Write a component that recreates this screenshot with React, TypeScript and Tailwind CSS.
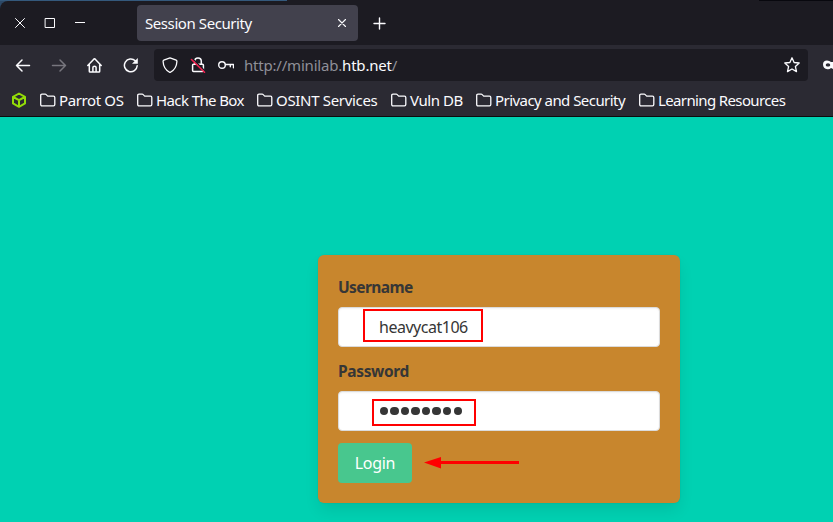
import React from "react";

const bookmarks = [
  { name: "Parrot OS", item: "w-[97px]", text: "tracking-[-0.38px]" },
  { name: "Hack The Box", item: "w-[120px]", text: "tracking-[-0.6px]" },
  { name: "OSINT Services", item: "w-[134px]", text: "tracking-[-0.32px]" },
  { name: "Vuln DB", item: "w-[85px]", text: "tracking-[-0.42px]" },
  { name: "Privacy and Security", item: "w-[163px]", text: "tracking-[-0.55px]" },
  { name: "Learning Resources", item: "w-[150px]", text: "tracking-[-0.63px]" },
];

type IconProps = { className?: string; children: React.ReactNode; size?: number; stroke?: number };

function Icon({ className = "", children, size = 16, stroke = 1.3 }: IconProps) {
  return (
    <svg
      width={size}
      height={size}
      viewBox={`0 0 ${size} ${size}`}
      fill="none"
      stroke="currentColor"
      strokeWidth={stroke}
      strokeLinecap="round"
      strokeLinejoin="round"
      className={`shrink-0 ${className}`}
    >
      {children}
    </svg>
  );
}

function TitleBar() {
  return (
    <div className="flex h-11 rounded-tl-lg bg-[#1c1b22] pl-3">
      <div className="flex h-11 w-[125px] items-center gap-[14px] text-[#fbfbfe]">
        <Icon stroke={1}><path d="M3.500 3.500l9 9M12.500 3.500l-9 9" /></Icon>
        <Icon stroke={1}><path strokeLinejoin="miter" d="M3.500 3.500h9v9h-9z" /></Icon>
        <Icon stroke={1}><path strokeLinecap="butt" d="M3 7.500h10" /></Icon>
      </div>
      <div className="mt-1 flex h-9 w-[221px] items-center justify-between rounded bg-[#42414d] pr-2 pl-2 text-[#fbfbfe]">
        <span className="text-[15px] tracking-[-0.42px]">Session Security</span>
        <Icon stroke={1.1}><path d="M4.500 4.500l7 7M11.500 4.500l-7 7" /></Icon>
      </div>
      <Icon className="mt-[14px] ml-[13px] text-[#fbfbfe]" stroke={1.4}><path d="M8.500 3v11M3 8.500h11" /></Icon>
    </div>
  );
}

function Toolbar() {
  return (
    <div className="flex h-10 items-center overflow-hidden pl-[15px] text-[#fbfbfe]">
      <Icon stroke={1.5}><path d="M14.500 8.500H1.500M7 3L1.500 8.500 7 14" /></Icon>
      <Icon stroke={1.5} className="ml-5 text-[#77767e]"><path d="M1.500 8.500h13M9 3l5.500 5.500L9 14" /></Icon>
      <Icon className="ml-5" stroke={1.5}>
        <path d="M.8 8.500L7 1.900q.5-.4 1 0l6.200 6.600M2.300 7.500v6.700q0 .8.8.8h8.800q.8 0 .8-.8V7.500M5.900 14.500V10.600q0-1.300 1.600-1.300t1.600 1.300V14.500" />
      </Icon>
      <Icon className="ml-5" stroke={1.5}>
        <path d="M14.200 8.800A6.400 6.400 0 1 1 12.300 3.800" />
        <path fill="currentColor" stroke="none" d="M14.800 1v5.800H9z" />
      </Icon>
      <div className="ml-[15px] flex h-8 w-[654px] items-center rounded bg-[#1c1b22] pr-2 pl-2">
        <Icon><path d="M8 .9L14.200 3.200Q15 3.500 14.900 4.500C14.700 9.500 12.500 13.200 8 15.500 3.500 13.200 1.300 9.500 1.100 4.500Q1 3.500 1.800 3.200z" /></Icon>
        <Icon className="ml-3" stroke={1.5}>
          <path d="M4.700 7V4.200a3.300 3.300 0 0 1 6.600 0V7M3.500 7.200h9q.9 0 .9.900v5.500q0 .9-.9.900h-9q-.9 0-.9-.9V8.100q0-.9.900-.9z" />
          <path stroke="#1c1b22" strokeWidth="1.500" d="M2.500 1.700l13 12.800" />
          <path stroke="#f0204f" strokeWidth="1.600" d="M1.500 2.500l13 12.800" />
        </Icon>
        <Icon className="ml-3" stroke={1.4}>
          <circle cx="4" cy="8" r="3.300" />
          <path d="M7.500 7.500H15.500V10.800M12.300 7.500V9.800" />
        </Icon>
        <div className="ml-[10px] flex-1 text-[15px] tracking-[-0.2px] text-[#8f8f98]">
          http://minilab.<span className="text-[#fbfbfe]">htb.net</span>/
        </div>
        <Icon stroke={1.3}><path d="M8 .8l2.100 4.700 5.100.5-3.800 3.500 1.100 5.100L8 12l-4.500 2.600 1.100-5.100L.8 6l5.100-.5z" /></Icon>
      </div>
      <svg width="10" height="16" viewBox="0 0 10 16" className="ml-[15px] shrink-0">
        <path fillRule="evenodd" fill="#fbfbfe" d="M4 3.500q2.500 0 4 1.500H10v7q-.8-.5-2-1-1.500 1.500-3.500 1.200C1.500 11.900 0 10.300 0 7.500 0 5 1.500 3.500 4 3.500zM5 6.200C3.700 6.200 2.800 7 2.800 8S3.700 9.600 5 9.600 7.200 9 7.200 8 6.300 6.200 5 6.200z" />
      </svg>
    </div>
  );
}

function BookmarksBar() {
  return (
    <div className="flex h-8 items-center overflow-hidden border-b border-[#0c0c0d] pb-px pl-[11px] text-[#fbfbfe]">
      <Icon className="mr-[13px] text-[#93dc08]" stroke={2}>
        <path d="M8 1.500l6 3.400v6.500L8 14.800l-6-3.400V4.900zM2.200 5L8 8.200 13.800 5M8 8.200v6.400" />
      </Icon>
      {bookmarks.map((b) => (
        <div key={b.name} className={`flex shrink-0 items-center gap-[3px] ${b.item}`}>
          <Icon><path d="M.7 12.500v-9q0-1.300 1.300-1.300h3.200q.6 0 1 .4l1.500 1.500h5.800q1.300 0 1.300 1.300v7.100q0 1.300-1.300 1.300H2q-1.300 0-1.300-1.300z" /></Icon>
          <span className={`pb-px text-[15px] leading-5 whitespace-nowrap ${b.text}`}>{b.name}</span>
        </div>
      ))}
    </div>
  );
}

function LoginForm() {
  return (
    <form className="ml-[318px] h-[248px] w-[362px] rounded-md bg-[#c8862d] p-5 text-base leading-6 text-[#363636] shadow-[0_8px_16px_-2px_rgba(10,10,10,0.1),0_0_0_1px_rgba(10,10,10,0.02)]">
      <div className="mb-2 text-[15.5px] leading-6 font-bold tracking-[-0.6px]">Username</div>
      <div className="relative mb-3 flex h-10 items-center rounded border border-[#dbdbdb] bg-white pl-10 tracking-[-0.48px] shadow-[inset_0_1px_2px_rgba(10,10,10,0.05)]">
        heavycat106
        <div className="absolute top-[1px] left-6 h-[33px] w-[120px] border-2 border-[#ff0000]" />
      </div>
      <div className="mb-2 text-[15.5px] leading-6 font-bold tracking-[-0.35px]">Password</div>
      <div className="relative mb-3 flex h-10 items-center rounded border border-[#dbdbdb] bg-white pl-10 shadow-[inset_0_1px_2px_rgba(10,10,10,0.05)]">
        <div className="ml-[0.700px] flex gap-[2.050px]">
          {Array.from({ length: 8 }, (_, i) => (
            <span key={i} className="size-[8.500px] rounded-full bg-[#363636]" />
          ))}
        </div>
        <div className="absolute top-[7px] left-[33px] h-[27px] w-[104px] border-2 border-[#ff0000]" />
      </div>
      <div className="flex items-center">
        <button type="button" className="h-10 w-[74px] rounded bg-[#48c78e] tracking-[-0.3px] text-white">Login</button>
        <svg width="96" height="12" viewBox="0 0 96 12" className="ml-3 shrink-0" fill="#ff0000">
          <path d="M0 5.500L17 0v11.500zM16 4h79v3H16z" />
        </svg>
      </div>
    </form>
  );
}

export default function App() {
  return (
    <main className="flex h-[522px] w-[833px] flex-col overflow-hidden bg-[#00d1b2] font-['Noto_Sans',sans-serif]">
      <header className="h-[117px] shrink-0 bg-[#2b2a33]">
        <div className="bg-[#2c4866]">
          <div className="flex h-px">
            <div className="w-[287px] bg-[#34597c]" />
            <div className="flex-1 bg-[#1c1b22]" />
            <div className="w-[74px] bg-[#08080e]" />
          </div>
          <TitleBar />
        </div>
        <Toolbar />
        <BookmarksBar />
      </header>
      <div className="pt-[138px]"><LoginForm /></div>
    </main>
  );
}
